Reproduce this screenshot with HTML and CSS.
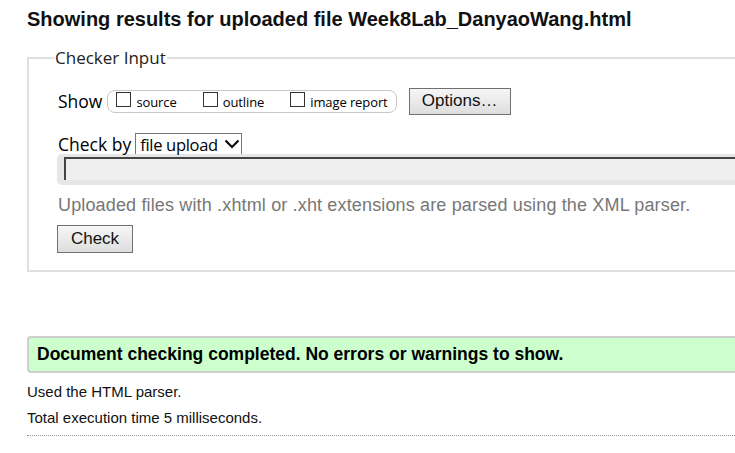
FILE: index.html
```html
<!DOCTYPE html>
<html>
<head>
<meta charset="utf-8">
<link rel="stylesheet" href="styles.css">
</head>
<body>
<div class="page">
  <h1 class="title">Showing results for uploaded file Week8Lab_DanyaoWang.html</h1>
  <fieldset class="checker">
    <legend class="legend">Checker Input</legend>
    <div class="show-row">
      <span class="show-label">Show</span>
      <span class="pill">
        <span class="opt"><span class="box"></span><span class="opt-text">source</span></span>
        <span class="opt"><span class="box"></span><span class="opt-text">outline</span></span>
        <span class="opt"><span class="box"></span><span class="opt-text">image report</span></span>
      </span>
      <span class="btn btn-options">Options…</span>
    </div>
    <div class="checkby-row">
      <span class="checkby-label">Check by</span>
      <span class="select">file upload<svg class="chev" width="16" height="10" viewBox="0 0 16 10"><path d="M1.5 1.5 L8 8 L14.5 1.5" fill="none" stroke="#000" stroke-width="2"/></svg></span>
    </div>
    <div class="file-wrap"><div class="file-inner"></div></div>
    <p class="note">Uploaded files with .xhtml or .xht extensions are parsed using the XML parser.</p>
    <span class="btn btn-check">Check</span>
  </fieldset>
  <div class="success">Document checking completed. No errors or warnings to show.</div>
  <p class="info">Used the HTML parser.</p>
  <p class="info info2">Total execution time 5 milliseconds.</p>
  <div class="dots"></div>
</div>
</body>
</html>
```
FILE: styles.css
```css
html, body {
  margin: 0;
  padding: 0;
  overflow: hidden;
  background: #fff;
}
.page {
  width: 900px;
  padding: 0 0 0 27px;
  font-family: "Liberation Sans", Arial, sans-serif;
  color: #000;
}
.title {
  margin: 0;
  padding-top: 7px;
  font-size: 20px;
  line-height: 24px;
  font-weight: bold;
  color: #111;
}
.checker {
  margin: 17px 0 0 0;
  padding: 4px 0 17px 29px;
  border: 2px solid #e0e0e0;
  border-right: none;
  min-width: 0;
}
.legend {
  font-family: "Open Sans", "Noto Sans", sans-serif;
  font-size: 17px;
  line-height: 20px;
  padding: 0 1px;
  margin-left: -4px;
  color: #222;
}
.show-row {
  display: flex;
  align-items: center;
  margin-top: 15px;
  height: 28px;
}
.show-label {
  font-family: "Open Sans", "Noto Sans", sans-serif;
  font-size: 17.5px;
  margin-right: 5px;
}
.pill {
  display: flex;
  align-items: center;
  height: 21px;
  border: 1px solid #c8c8c8;
  border-radius: 8px;
  padding: 0 8px;
  font-family: "Open Sans", "Noto Sans", sans-serif;
  font-size: 13px;
  letter-spacing: -0.1px;
}
.opt {
  display: flex;
  align-items: center;
  margin-right: 26px;
}
.opt:last-child { margin-right: 0; }
.box {
  width: 13px;
  height: 13px;
  border: 1px solid #333;
  margin-right: 5px;
  position: relative;
  top: -2px;
}
.opt-text { position: relative; top: 1px; }
.btn {
  display: inline-flex;
  align-items: center;
  justify-content: center;
  box-sizing: border-box;
  border: 1px solid #707070;
  background: linear-gradient(#f6f6f6, #dedede);
  font-family: "Liberation Sans", Arial, sans-serif;
  font-size: 17px;
  color: #111;
}
.btn-options {
  width: 102px;
  height: 27px;
  margin-left: 12px;
}
.checkby-row {
  display: flex;
  align-items: flex-end;
  margin-top: 18px;
  height: 21px;
}
.checkby-label {
  font-family: "Open Sans", "Noto Sans", sans-serif;
  font-size: 17.5px;
  margin-right: 4px;
  line-height: 20px;
}
.select {
  display: inline-flex;
  align-items: center;
  box-sizing: border-box;
  height: 21px;
  width: 107px;
  border: 1px solid #767676;
  border-bottom: none;
  padding-left: 4px;
  font-family: "Open Sans", "Noto Sans", sans-serif;
  font-size: 16.5px;
  letter-spacing: -0.3px;
}
.chev { margin-left: 6px; }
.file-wrap {
  margin-left: -1px;
  height: 31px;
  background: #e6e6e6;
  border-radius: 5px 0 0 5px;
  padding: 3px 0 0 7px;
  box-sizing: border-box;
}
.file-inner {
  height: 23px;
  box-sizing: border-box;
  background: #efefef;
  border-top: 2px solid #444;
  border-left: 2px solid #444;
}
.note {
  margin: 9px 0 0 0;
  font-size: 18px;
  line-height: 22px;
  letter-spacing: 0.15px;
  color: #777;
}
.btn-check {
  margin-top: 9px;
  margin-left: -1px;
  width: 76px;
  height: 28px;
}
.success {
  margin-top: 64px;
  height: 37px;
  box-sizing: border-box;
  background: #ccffcc;
  border: 2px solid #cfcfcf;
  border-right: none;
  border-radius: 4px 0 0 4px;
  padding-left: 8px;
  font-weight: bold;
  font-size: 17.5px;
  line-height: 33px;
  color: #000;
}
.info {
  margin: 10px 0 0 0;
  font-size: 15px;
  line-height: 18px;
  color: #111;
}
.info2 { margin-top: 8px; }
.dots {
  margin-top: 8px;
  border-top: 1px dotted #999;
}
```
